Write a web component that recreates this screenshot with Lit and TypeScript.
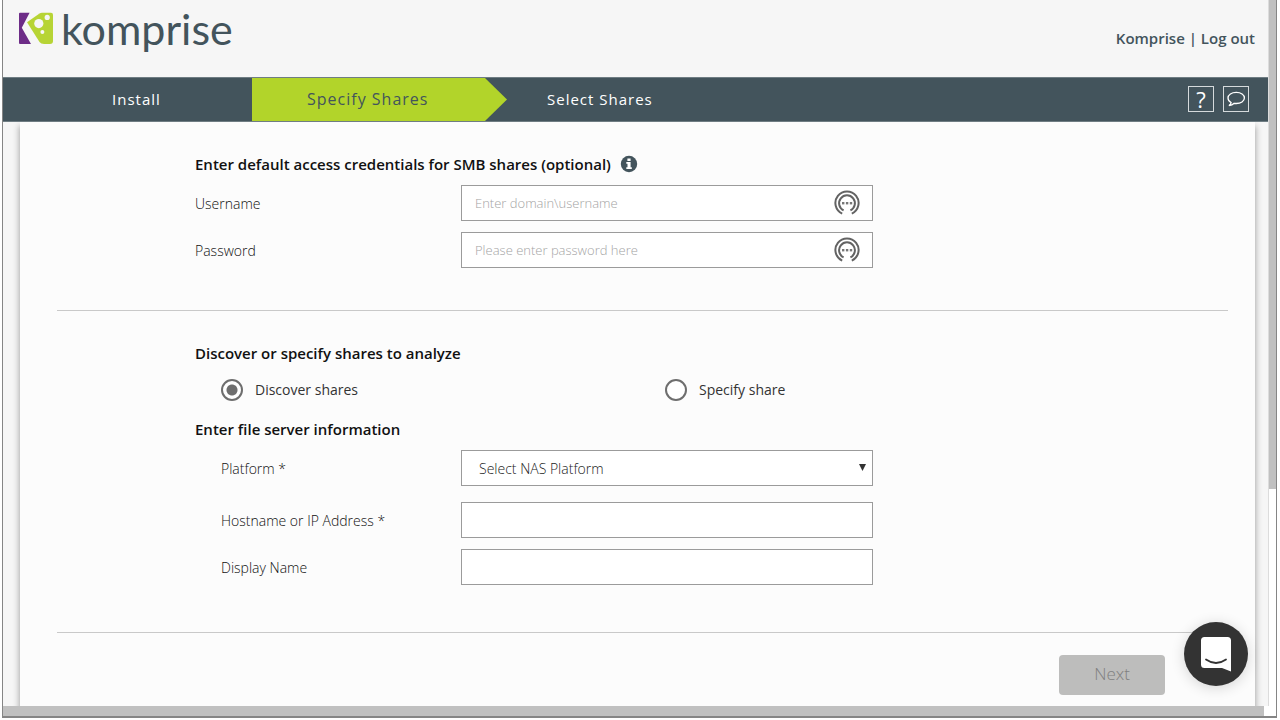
import { LitElement, css, html, svg } from "lit";
import { customElement, state } from "lit/decorators.js";

const keyRing = svg`
  <path d="M8.2 23.6 A11.6 11.6 0 1 1 17.8 23.6" />
  <path d="M9.6 20.4 A7.9 7.9 0 1 1 16.4 20.4" />
  <g class="dots"><rect x="8" y="12" width="2.4" height="2.4" /><rect x="11.9" y="12" width="2.4" height="2.4" /><rect x="15.8" y="12" width="2.4" height="2.4" /></g>
`;

@customElement("app-root")
export class AppRoot extends LitElement {
  @state() private mode = "discover";

  static styles = css`
    * {
      box-sizing: border-box;
    }
    :host {
      display: block;
      padding-bottom: 2px;
      font-family: "Open Sans", "Noto Sans", sans-serif;
      font-size: 14px;
      line-height: 20px;
      color: #333;
      background: #fff;
    }
    .frame {
      position: relative;
      display: grid;
      grid-template-columns: minmax(0, 1fr) 8px;
      grid-template-rows: 1fr 10px;
      min-height: calc(100vh - 2px);
      border: solid #858585;
      border-width: 0 1px 2px;
      margin: 0 3px 0 2px;
      background: #fff;
    }
    .page {
      display: flex;
      flex-direction: column;
      background: #f6f6f6;
      min-width: 0;
    }
    .vbar {
      border-left: 1px solid #dcdcdc;
      background: linear-gradient(#c0c0c0 489px, #fff 489px);
    }
    .hbar {
      background: #c0c0c0;
      margin-right: 12px;
      grid-column: 1 / -1;
    }
    header {
      display: flex;
      justify-content: space-between;
      align-items: center;
      height: 77px;
      padding: 0 13px 0 15px;
    }
    .brand {
      display: flex;
      align-items: flex-start;
      gap: 8px;
      height: 77px;
      padding-top: 12px;
      color: #43545c;
      text-decoration: none;
    }
    .brand svg {
      width: 35px;
      height: 33px;
    }
    .word {
      font: 43px/34px Lato, sans-serif;
    }
    .account {
      padding-bottom: 2px;
      font-size: 15px;
      font-weight: 600;
      color: #43545c;
    }
    .account a {
      color: inherit;
      text-decoration: none;
    }
    nav {
      display: flex;
      align-items: stretch;
      height: 45px;
      background: #43545c;
      border: solid #6f7d83;
      border-width: 1px 0;
      padding-right: 19px;
    }
    .step {
      display: flex;
      align-items: center;
      padding-bottom: 2px;
      color: #fff;
      font-size: 15px;
      letter-spacing: 1px;
      text-decoration: none;
    }
    .install {
      width: 249px;
      padding-left: 109px;
    }
    .current {
      width: 255px;
      padding-left: 55px;
      background: #b2d42a;
      color: #43545c;
      font-size: 16px;
      clip-path: polygon(0 0, 233px 0, 100% 50%, 233px 100%, 0 100%);
    }
    .last {
      padding-left: 40px;
    }
    .tools {
      display: flex;
      align-items: center;
      gap: 9px;
      padding-bottom: 2px;
      margin-left: auto;
    }
    .tool {
      width: 26px;
      height: 26px;
      padding: 0;
      display: grid;
      place-items: center;
      border: 1px solid #d5dadc;
      background: none;
      color: #fff;
      font: 22px/22px "Open Sans", sans-serif;
    }
    .tool svg {
      width: 20px;
      height: 18px;
      fill: none;
      stroke: #fff;
      stroke-width: 1.3;
    }
    main {
      flex: 1;
      margin: 0 13px 0 17px;
      padding: 32px 27px 11px 37px;
      background: #fcfcfc;
      box-shadow: 0 5px 6px 1px #aaa;
      clip-path: inset(0 -13px 0 -17px);
    }
    .block {
      padding-left: 138px;
    }
    h2 {
      display: flex;
      align-items: center;
      gap: 9px;
      margin: 0;
      font-size: 15px;
      font-weight: 600;
      line-height: 20px;
      color: #111;
    }
    h2 svg {
      width: 18px;
      height: 18px;
    }
    .row {
      display: grid;
      grid-template-columns: 266px minmax(0, 412px);
      align-items: center;
      margin-top: 11px;
      font-weight: 300;
      color: #111;
    }
    .row label {
      padding-top: 2px;
    }
    .indent label {
      padding-left: 26px;
    }
    .row.wide {
      margin-top: 16px;
    }
    .field {
      position: relative;
      display: block;
    }
    input.text,
    select {
      display: block;
      width: 100%;
      height: 36px;
      padding: 0 44px 0 13px;
      border: 1px solid #9b9b9b;
      border-radius: 0;
      background: #fff;
      color: #222;
      font: 300 13px/20px "Open Sans", sans-serif;
      outline: none;
    }
    input.text::placeholder {
      color: #a4a4a4;
      opacity: 1;
    }
    select {
      appearance: none;
      padding-top: 2px;
      padding-left: 17px;
      font-size: 14px;
    }
    .field svg {
      position: absolute;
      pointer-events: none;
    }
    .ring {
      right: 13px;
      top: 5px;
      width: 26px;
      height: 26px;
      fill: none;
      stroke: #636363;
      stroke-width: 2;
    }
    .ring .dots {
      fill: #777;
      stroke: none;
    }
    .arrow {
      right: 7px;
      top: 14px;
      width: 7px;
      height: 7px;
      fill: #333;
    }
    hr {
      height: 1px;
      border: 0;
      margin: 42px 0 32px;
      background: #c9c9c9;
    }
    hr.foot {
      margin: 47px 0 22px;
    }
    .choices {
      display: grid;
      grid-template-columns: 444px auto;
      justify-content: start;
      margin: 16px 0 18px;
      padding-left: 26px;
      color: #333;
    }
    .choices label {
      display: flex;
      align-items: center;
      gap: 12px;
    }
    .choices input {
      appearance: none;
      width: 22px;
      height: 22px;
      margin: 0;
      border: 2px solid #6e6e6e;
      border-radius: 50%;
      background: #fff;
    }
    .choices input:checked {
      background: radial-gradient(circle, #6e6e6e 5px, #fff 6px);
    }
    .actions {
      display: flex;
      justify-content: flex-end;
      padding-right: 63px;
    }
    .next {
      width: 106px;
      height: 40px;
      padding: 0 0 2px;
      border: 0;
      border-radius: 4px;
      background: #bdbdbc;
      color: #808080;
      font: 300 17px/24px "Open Sans", sans-serif;
    }
    .chat {
      position: absolute;
      right: 28px;
      bottom: 30px;
      width: 64px;
      height: 64px;
      padding: 0;
      display: grid;
      place-items: center;
      border: 0;
      border-radius: 50%;
      background: #333;
      box-shadow: 0 2px 14px rgba(0, 0, 0, 0.16);
    }
    .chat svg {
      width: 32px;
      height: 36px;
    }
  `;

  private pick(e: Event) {
    this.mode = (e.target as HTMLInputElement).value;
  }

  render() {
    return html`
      <div class="frame">
        <div class="page">
          <header>
            <a class="brand" href="#">
              <svg viewBox="0 0 35 33" aria-hidden="true">
                <path fill="#6d2c87" d="M2 .7H11.6L3.8 15.7 13 32H2Q1 32 1 31V1.7Q1 .7 2 .7Z" />
                <path fill="#b7d435" d="M9 10.2 21.5 1.4Q22.5 .7 24 .7H33Q35 .7 35 2.7V29Q35 32 32 32H26Q23 32 21.5 30Z" />
                <g fill="#f6f6f6"><circle cx="20.8" cy="11.6" r="4.6" /><circle cx="29.2" cy="5.4" r="2.6" /><circle cx="24.4" cy="20" r="2" /></g>
              </svg>
              <span class="word">komprise</span>
            </a>
            <div class="account"><a href="#">Komprise</a> | <a href="#">Log out</a></div>
          </header>
          <nav>
            <a class="step install" href="#">Install</a>
            <a class="step current" href="#" aria-current="step">Specify Shares</a>
            <a class="step last" href="#">Select Shares</a>
            <div class="tools">
              <button class="tool" aria-label="Help">?</button>
              <button class="tool" aria-label="Feedback">
                <svg viewBox="0 0 20 18"><path d="M5.1 12.6Q2 10.8 2 8C2 4.6 5.6 2.4 10.3 2.4S18.4 4.8 18.4 8 14.8 13.5 10.3 13.5Q9.2 13.5 8.2 13.3 6.2 15.3 2.9 15.5 4.8 14.6 5.1 12.6Z" /></svg>
              </button>
            </div>
          </nav>
          <main>
            <section class="block">
              <h2>
                Enter default access credentials for SMB shares (optional)
                <svg viewBox="0 0 18 18" aria-hidden="true">
                  <circle cx="9" cy="9" r="8.2" fill="#43545c" />
                  <path fill="#fff" d="M7.4 3.4H10.6V6H7.4ZM6.3 7.1H10.6V12.3H11.8V14.1H6.3V12.3H7.5V8.8H6.3Z" />
                </svg>
              </h2>
              <div class="row">
                <label for="user">Username</label>
                <span class="field">
                  <input class="text" id="user" type="text" placeholder="Enter domain\\username" />
                  <svg class="ring" viewBox="0 0 26 26">${keyRing}</svg>
                </span>
              </div>
              <div class="row">
                <label for="pass">Password</label>
                <span class="field">
                  <input class="text" id="pass" type="password" placeholder="Please enter password here" />
                  <svg class="ring" viewBox="0 0 26 26">${keyRing}</svg>
                </span>
              </div>
            </section>
            <hr />
            <section class="block">
              <h2>Discover or specify shares to analyze</h2>
              <div class="choices" @change=${this.pick}>
                <label><input type="radio" name="mode" value="discover" .checked=${this.mode === "discover"} />Discover shares</label>
                <label><input type="radio" name="mode" value="specify" .checked=${this.mode === "specify"} />Specify share</label>
              </div>
              <h2>Enter file server information</h2>
              <div class="row indent">
                <label for="platform">Platform *</label>
                <span class="field">
                  <select id="platform">
                    <option>Select NAS Platform</option>
                  </select>
                  <svg class="arrow" viewBox="0 0 7 7"><path d="M0 0H7L3.5 7Z" /></svg>
                </span>
              </div>
              <div class="row indent wide">
                <label for="host">Hostname or IP Address *</label>
                <span class="field"><input class="text" id="host" type="text" /></span>
              </div>
              <div class="row indent">
                <label for="display">Display Name</label>
                <span class="field"><input class="text" id="display" type="text" /></span>
              </div>
            </section>
            <hr class="foot" />
            <div class="actions"><button class="next" disabled>Next</button></div>
          </main>
        </div>
        <div class="vbar"></div>
        <div class="hbar"></div>
        <button class="chat" aria-label="Chat">
          <svg viewBox="0 0 32 36">
            <path fill="#fff" d="M4.5 1H27.5Q31 1 31 4.5V35.5L22 32H4.5Q1 32 1 28.5V4.5Q1 1 4.5 1Z" />
            <path fill="none" stroke="#333" stroke-width="1.8" stroke-linecap="round" d="M6 23.5Q16 30.5 26 23.5" />
          </svg>
        </button>
      </div>
    `;
  }
}
